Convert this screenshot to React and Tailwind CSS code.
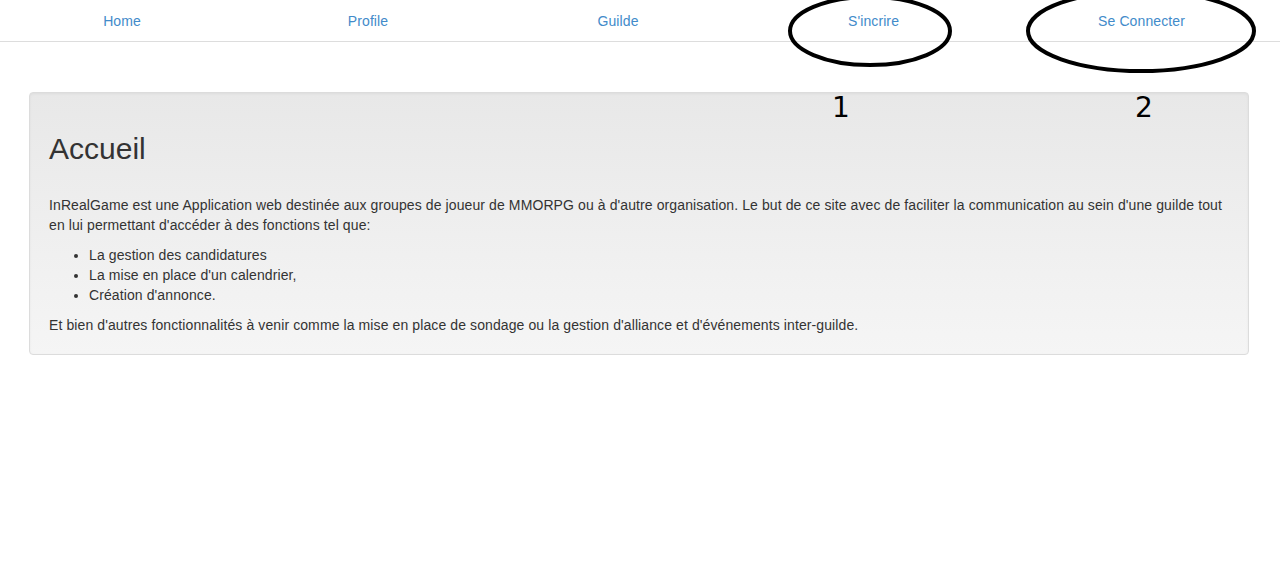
import React from "react";

const tabs = [
  { label: "Home", w: "w-[244px]" },
  { label: "Profile", w: "w-[248px]" },
  { label: "Guilde", w: "w-[252px]" },
  { label: "S'incrire", w: "w-[259px]" },
  { label: "Se Connecter", w: "flex-1" },
];

function Annotations() {
  return (
    <div className="pointer-events-none absolute inset-0">
      <svg className="absolute left-0 top-0" width="1280" height="130">
        <ellipse cx="870" cy="31" rx="80" ry="34" fill="none" stroke="#000" strokeWidth="4" />
        <ellipse cx="1141" cy="31" rx="113" ry="40" fill="none" stroke="#000" strokeWidth="4" />
      </svg>
      <span className="absolute left-[832px] top-[94px] text-[28px] leading-none text-black [font-family:'DejaVu_Sans',sans-serif]">
        1
      </span>
      <span className="absolute left-[1135px] top-[94px] text-[28px] leading-none text-black [font-family:'DejaVu_Sans',sans-serif]">
        2
      </span>
    </div>
  );
}

export default function App() {
  return (
    <div className="relative min-h-[579px] bg-white text-[14px] leading-[20px] tracking-[0.1px] text-[#333] [font-family:'Liberation_Sans',Arial,sans-serif]">
      <nav className="flex border-b border-[#ddd]">
        {tabs.map((t) => (
          <a
            key={t.label}
            href="#"
            className={`${t.w} block px-[15px] pt-[11px] pb-[10px] text-center text-[#428bca]`}
          >
            {t.label}
          </a>
        ))}
      </nav>

      <div className="ml-[29px] mr-[31px] mt-[50px] rounded-[4px] border border-[#dcdcdc] bg-gradient-to-b from-[#e8e8e8] to-[#f5f5f5] p-[19px] shadow-[inset_0_1px_3px_rgba(0,0,0,0.05)]">
        <h2 className="mb-[30px] mt-[20px] text-[30px] leading-[1.1] font-normal tracking-normal">Accueil</h2>
        <p className="mb-[10px]">
          InRealGame est une Application web destinée aux groupes de joueur de MMORPG ou à d'autre organisation. Le but de ce site avec de faciliter la communication au sein d'une guilde tout en lui permettant d'accéder à des fonctions tel que:
        </p>
        <ul className="mb-[10px] list-disc pl-[40px]">
          <li>La gestion des candidatures</li>
          <li>La mise en place d'un calendrier,</li>
          <li>Création d'annonce.</li>
        </ul>
        <p>
          Et bien d'autres fonctionnalités à venir comme la mise en place de sondage ou la gestion d'alliance et d'événements inter-guilde.
        </p>
      </div>

      <Annotations />
    </div>
  );
}
